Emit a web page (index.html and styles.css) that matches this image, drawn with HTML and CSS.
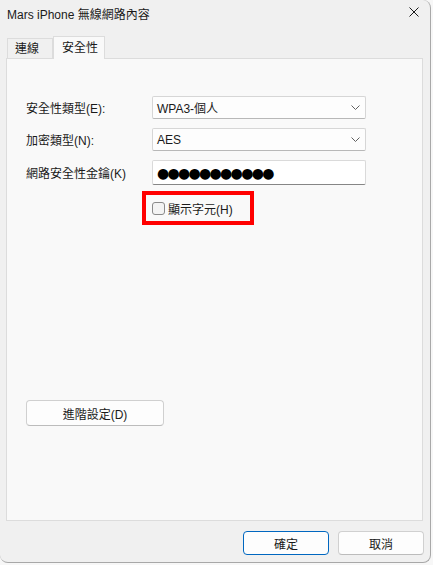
FILE: index.html
```html
<!DOCTYPE html>
<html>
  <head>
    <title>Mars iPhone 無線網路內容</title>
    <link rel="stylesheet" href="styles.css">
  </head>
  <body>
    <div class="window">
      <div class="title-bar">
        <span class="title">Mars iPhone 無線網路內容</span>
        <svg class="close" width="10" height="10" viewBox="0 0 10 10">
          <path d="M0.5 0.5 L9.5 9.5 M9.5 0.5 L0.5 9.5" stroke="#1a1a1a" stroke-width="1"/>
        </svg>
      </div>

      <div class="tabs">
        <div class="tab">連線</div>
        <div class="tab active">安全性</div>
      </div>

      <div class="panel">
        <div class="form-grid">
          <label class="field-label">安全性類型(E):</label>
          <div class="select">
            <span>WPA3-個人</span>
            <svg width="9" height="5" viewBox="0 0 9 5"><path d="M0.5 0.5 L4.5 4.5 L8.5 0.5" fill="none" stroke="#606060" stroke-width="1"/></svg>
          </div>

          <label class="field-label">加密類型(N):</label>
          <div class="select">
            <span>AES</span>
            <svg width="9" height="5" viewBox="0 0 9 5"><path d="M0.5 0.5 L4.5 4.5 L8.5 0.5" fill="none" stroke="#606060" stroke-width="1"/></svg>
          </div>

          <label class="field-label">網路安全性金鑰(K)</label>
          <div class="text-input">
            <span class="dots">●●●●●●●●●●●</span>
          </div>
        </div>

        <div class="check-row">
          <div class="highlight">
            <span class="checkbox"></span>
            <span>顯示字元(H)</span>
          </div>
        </div>

        <button class="btn advanced">進階設定(D)</button>
      </div>

      <div class="footer">
        <button class="btn primary">確定</button>
        <button class="btn">取消</button>
      </div>
    </div>
  </body>
</html>
```

FILE: styles.css
```css
body {
  margin: 0;
  background: #f7f7f7;
  font-family: "Liberation Sans", "Noto Sans CJK TC", sans-serif;
  font-size: 12px;
  color: #1a1a1a;
}
.window {
  box-sizing: border-box;
  width: 431px;
  height: 563px;
  background: #f0f0f0;
  border-right: 1px solid #a8a8a8;
  border-bottom: 1px solid #a8a8a8;
  border-radius: 0 8px 8px 8px;
}
.title-bar {
  height: 26px;
  display: flex;
  align-items: center;
  justify-content: space-between;
  padding: 0 11px 0 7px;
}
.title {
  font-size: 12px;
}
.close {
  margin-top: -2px;
}
.tabs {
  display: flex;
  align-items: flex-end;
  margin-top: 10px;
  padding-left: 7px;
  height: 22px;
}
.tab {
  box-sizing: border-box;
  height: 20px;
  padding: 0 0 0 7px;
  border: 1px solid #dcdcdc;
  border-bottom: none;
  background: #f0f0f0;
  line-height: 20px;
  width: 46px;
  white-space: nowrap;
}
.tab.active {
  height: 23px;
  width: 52px;
  margin-bottom: -1px;
  background: #f9f9f9;
  line-height: 22px;
  padding: 0 0 0 8px;
  position: relative;
  z-index: 1;
}
.panel {
  box-sizing: border-box;
  margin-left: 6px;
  width: 417px;
  height: 463px;
  background: #f9f9f9;
  border: 1px solid #dcdcdc;
  padding: 37px 0 0 19px;
}
.form-grid {
  display: grid;
  grid-template-columns: 126px 214px;
  grid-template-rows: 23px 23px 25px;
  row-gap: 9px;
  align-items: center;
}
.field-label {
  font-size: 12px;
}
.select {
  box-sizing: border-box;
  height: 23px;
  display: flex;
  align-items: center;
  justify-content: space-between;
  padding: 0 5px 0 4px;
  background: #fdfdfd;
  border: 1px solid #d6d6d6;
  border-bottom-color: #b8b8b8;
  border-radius: 2px;
  font-size: 12px;
}
.text-input {
  box-sizing: border-box;
  height: 25px;
  display: flex;
  align-items: center;
  padding: 0 4px;
  background: #ffffff;
  border: 1px solid #dadada;
  border-bottom: 1px solid #868686;
  border-radius: 2px;
}
.dots {
  font-family: "DejaVu Sans", sans-serif;
  font-size: 14px;
  letter-spacing: -1.7px;
  color: #000;
}
.check-row {
  margin-top: 6px;
  padding-left: 116px;
}
.highlight {
  box-sizing: border-box;
  display: inline-flex;
  align-items: center;
  width: 112px;
  height: 34px;
  border: 4px solid #ff0000;
  padding-left: 6px;
  gap: 3px;
}
.checkbox {
  box-sizing: border-box;
  width: 13px;
  height: 13px;
  border: 1px solid #8a8a8a;
  border-radius: 3px;
  background: #f3f3f3;
}
.btn {
  box-sizing: border-box;
  font-family: "Liberation Sans", "Noto Sans CJK TC", sans-serif;
  font-size: 12px;
  color: #1a1a1a;
  background: #fdfdfd;
  border: 1px solid #d0d0d0;
  border-bottom-color: #bcbcbc;
  border-radius: 4px;
  padding: 0;
  cursor: pointer;
}
.advanced {
  display: block;
  margin-top: 175px;
  width: 138px;
  height: 26px;
}
.footer {
  display: flex;
  justify-content: flex-end;
  gap: 9px;
  padding: 10px 6px 0 0;
}
.footer .btn {
  width: 86px;
  height: 24px;
}
.footer .primary {
  border: 1px solid #0067c0;
}
```
